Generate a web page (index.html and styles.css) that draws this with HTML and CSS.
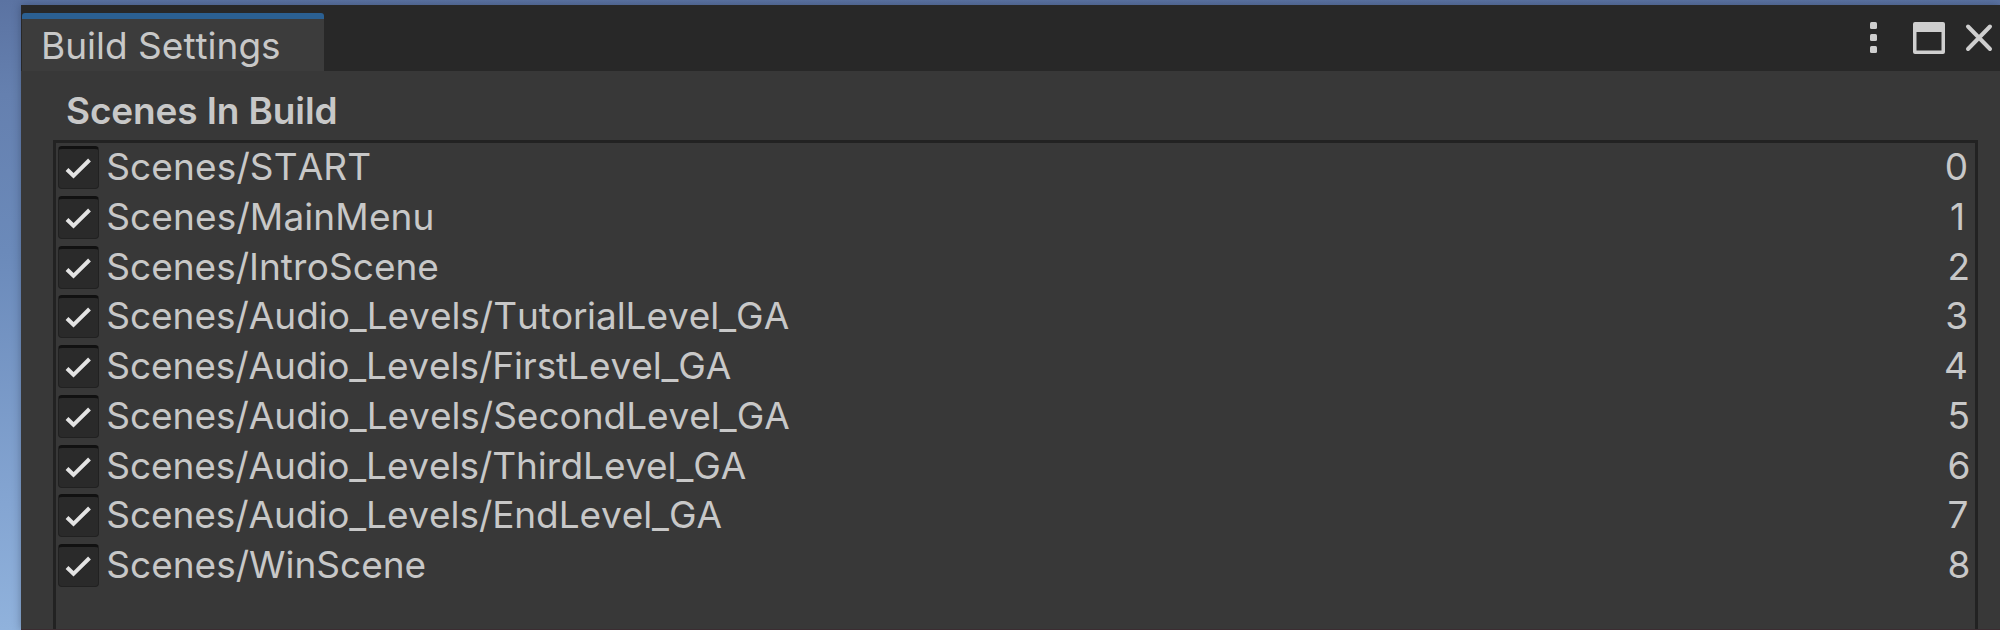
FILE: index.html
```html
<!DOCTYPE html>
<html lang="en">
<head>
<meta charset="utf-8">
<title>Build Settings</title>
<link rel="stylesheet" href="styles.css">
</head>
<body>
<svg class="defs" width="0" height="0"><symbol id="check" viewBox="0 0 39 39"><path d="M8 20.500 14.500 26.800 30.500 11" fill="none" stroke="#e4e4e4" stroke-width="4"/></symbol></svg>
<main class="window">
  <header class="titlebar">
    <div class="tab"><span>Build Settings</span></div>
    <svg class="controls" width="130" height="66" viewBox="0 1 130 66">
      <g fill="#cfcfcf"><rect x="0" y="18" width="7" height="7" rx="1.500"/><rect x="0" y="30" width="7" height="7" rx="1.500"/><rect x="0" y="42" width="7" height="7" rx="1.500"/>
      <path fill-rule="evenodd" d="M45 18h28a2 2 0 0 1 2 2v28a2 2 0 0 1-2 2H45a2 2 0 0 1-2-2V20a2 2 0 0 1 2-2zM46.500 28v18.500h25V28z"/></g>
      <path d="M98 22.500 120 45M120 22.500 98 45" fill="none" stroke="#cfcfcf" stroke-width="4" stroke-linecap="round"/>
    </svg>
  </header>
  <h1 class="heading"><span>Scenes In Build</span></h1>
  <ul class="scenes">
    <li class="row"><svg class="box"><use href="#check"/></svg><span class="name wide">Scenes/START</span><span class="num n0">0</span></li>
    <li class="row"><svg class="box"><use href="#check"/></svg><span class="name wide">Scenes/MainMenu</span><span class="num n1">1</span></li>
    <li class="row"><svg class="box"><use href="#check"/></svg><span class="name">Scenes/IntroScene</span><span class="num n2">2</span></li>
    <li class="row"><svg class="box"><use href="#check"/></svg><span class="name snug">Scenes/Audio_Levels/TutorialLevel_GA</span><span class="num n3">3</span></li>
    <li class="row"><svg class="box"><use href="#check"/></svg><span class="name tight">Scenes/Audio_Levels/FirstLevel_GA</span><span class="num n4">4</span></li>
    <li class="row"><svg class="box"><use href="#check"/></svg><span class="name snug">Scenes/Audio_Levels/SecondLevel_GA</span><span class="num n5">5</span></li>
    <li class="row"><svg class="box"><use href="#check"/></svg><span class="name tight">Scenes/Audio_Levels/ThirdLevel_GA</span><span class="num n6">6</span></li>
    <li class="row"><svg class="box"><use href="#check"/></svg><span class="name tight">Scenes/Audio_Levels/EndLevel_GA</span><span class="num n7">7</span></li>
    <li class="row"><svg class="box"><use href="#check"/></svg><span class="name">Scenes/WinScene</span><span class="num n8">8</span></li>
  </ul>
</main>
</body>
</html>
```
FILE: styles.css
```css
* { box-sizing: border-box; }
body {
  margin: 0;
  width: 2000px;
  height: 630px;
  overflow: hidden;
  padding: 5px 0 0 21px;
  background: linear-gradient(#5b73a2 0, #6580af 15%, #6b8aba 40%, #84a5d2 80%, #90b2dc 100%);
  font-family: Inter, "Liberation Sans", sans-serif;
  font-size: 37px;
  font-kerning: none;
  color: #c8c8c8;
}
.defs { position: absolute; }
.window {
  height: 625px;
  display: flex;
  flex-direction: column;
  background: #383838;
  border-bottom: 1px solid #3b2c31;
  box-shadow: 0 0 8px rgba(20, 30, 50, .35);
}
.titlebar {
  height: 66px;
  flex: none;
  display: flex;
  align-items: flex-end;
  justify-content: space-between;
  background: #282828;
}
.tab {
  width: 302px;
  height: 58px;
  margin-left: 1px;
  padding: 4px 0 0 19px;
  border-top: 6px solid #2b6092;
  border-radius: 3px 3px 0 0;
  background: #3c3c3c;
  line-height: 45px;
  white-space: nowrap;
}
.heading {
  margin: 0;
  height: 69px;
  flex: none;
  padding: 17px 0 0 45px;
  font-size: 37px;
  font-weight: 600;
  line-height: 45px;
  letter-spacing: -.13px;
}
.scenes {
  flex: 1;
  margin: 0 22px 0 32px;
  padding: 3px 0 0;
  list-style: none;
  border: solid #222;
  border-width: 3px 3px 0;
}
.row {
  height: 49.75px;
  display: flex;
  align-items: flex-start;
  line-height: 41px;
}
.box {
  width: 41px;
  height: 43px;
  margin: 0 7.25px 0 2px;
  flex: none;
  background: #2a2a2a;
  border: 1px solid #212121;
  border-top: 3px solid #111;
  border-radius: 4px;
}
.name { flex: 1; white-space: nowrap; }
.wide { letter-spacing: .12px; }
.snug { letter-spacing: -.03px; }
.tight { letter-spacing: -.08px; }
.n0 { padding-right: 7px; }
.n1 { padding-right: 10px; }
.n2 { padding-right: 5px; }
.n3 { padding-right: 7px; }
.n4 { padding-right: 7px; }
.n5 { padding-right: 5px; }
.n6 { padding-right: 4.5px; }
.n7 { padding-right: 6.5px; }
.n8 { padding-right: 4.5px; }
```
